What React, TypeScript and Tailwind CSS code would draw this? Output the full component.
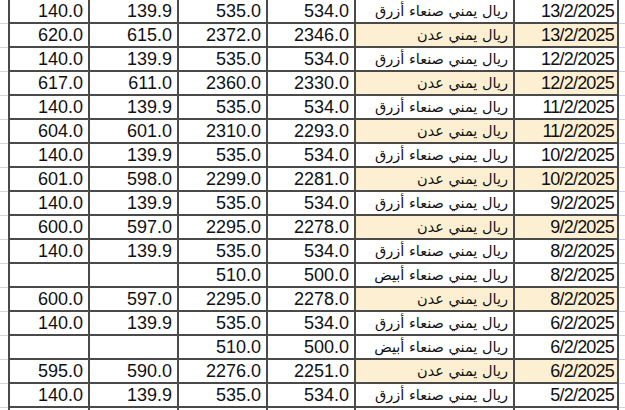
const AZRAQ = 'ريال يمني صنعاء أزرق'
const ADEN = 'ريال يمني عدن'
const ABYAD = 'ريال يمني صنعاء أبيض'

type Row = { a: string; b: string; c: string; d: string; name: string; date: string; hl?: boolean }

const rows: Row[] = [
  { a: '140.0', b: '139.9', c: '535.0', d: '534.0', name: AZRAQ, date: '13/2/2025' },
  { a: '620.0', b: '615.0', c: '2372.0', d: '2346.0', name: ADEN, date: '13/2/2025', hl: true },
  { a: '140.0', b: '139.9', c: '535.0', d: '534.0', name: AZRAQ, date: '12/2/2025' },
  { a: '617.0', b: '611.0', c: '2360.0', d: '2330.0', name: ADEN, date: '12/2/2025', hl: true },
  { a: '140.0', b: '139.9', c: '535.0', d: '534.0', name: AZRAQ, date: '11/2/2025' },
  { a: '604.0', b: '601.0', c: '2310.0', d: '2293.0', name: ADEN, date: '11/2/2025', hl: true },
  { a: '140.0', b: '139.9', c: '535.0', d: '534.0', name: AZRAQ, date: '10/2/2025' },
  { a: '601.0', b: '598.0', c: '2299.0', d: '2281.0', name: ADEN, date: '10/2/2025', hl: true },
  { a: '140.0', b: '139.9', c: '535.0', d: '534.0', name: AZRAQ, date: '9/2/2025' },
  { a: '600.0', b: '597.0', c: '2295.0', d: '2278.0', name: ADEN, date: '9/2/2025', hl: true },
  { a: '140.0', b: '139.9', c: '535.0', d: '534.0', name: AZRAQ, date: '8/2/2025' },
  { a: '', b: '', c: '510.0', d: '500.0', name: ABYAD, date: '8/2/2025' },
  { a: '600.0', b: '597.0', c: '2295.0', d: '2278.0', name: ADEN, date: '8/2/2025', hl: true },
  { a: '140.0', b: '139.9', c: '535.0', d: '534.0', name: AZRAQ, date: '6/2/2025' },
  { a: '', b: '', c: '510.0', d: '500.0', name: ABYAD, date: '6/2/2025' },
  { a: '595.0', b: '590.0', c: '2276.0', d: '2251.0', name: ADEN, date: '6/2/2025', hl: true },
  { a: '140.0', b: '139.9', c: '535.0', d: '534.0', name: AZRAQ, date: '5/2/2025' },
  { a: '', b: '', c: '', d: '', name: '', date: '' },
]

function Num({ value, w }: { value: string; w: string }) {
  return (
    <div className={`${w} flex items-center justify-end pr-[5px] border-r-2 border-[#4a4a4a]`}>
      {value}
    </div>
  )
}

export default function App() {
  return (
    <div className="h-[410px] w-[625px] overflow-hidden bg-white text-[#111] text-[18px] leading-none font-['Liberation_Sans',Arial,sans-serif]">
      {rows.map((r, i) => (
        <div key={i} className="flex h-[24px]">
          <div className="w-[8px] border-b border-[#d6d6d6]" />
          <div className="flex border-l-2 border-b-2 border-[#4a4a4a]">
            <Num value={r.a} w="w-[80px]" />
            <Num value={r.b} w="w-[89px]" />
            <Num value={r.c} w="w-[89px]" />
            <Num value={r.d} w="w-[88px]" />
            <div
              dir="rtl"
              className={`w-[159px] flex items-center justify-start pr-[5px] border-r-2 border-[#4a4a4a] text-[14.5px] font-['DejaVu_Sans',sans-serif] ${r.hl ? 'bg-[#fdf0d2]' : ''}`}
            >
              {r.name}
            </div>
            <div
              className={`w-[104px] flex items-center justify-end pr-[3px] border-r-2 border-[#4a4a4a] text-[18px] tracking-[-0.8px] ${r.hl ? 'bg-[#fdf0d2]' : ''}`}
            >
              {r.date}
            </div>
          </div>
          <div className="flex-1 border-b border-[#d6d6d6]" />
        </div>
      ))}
    </div>
  )
}
